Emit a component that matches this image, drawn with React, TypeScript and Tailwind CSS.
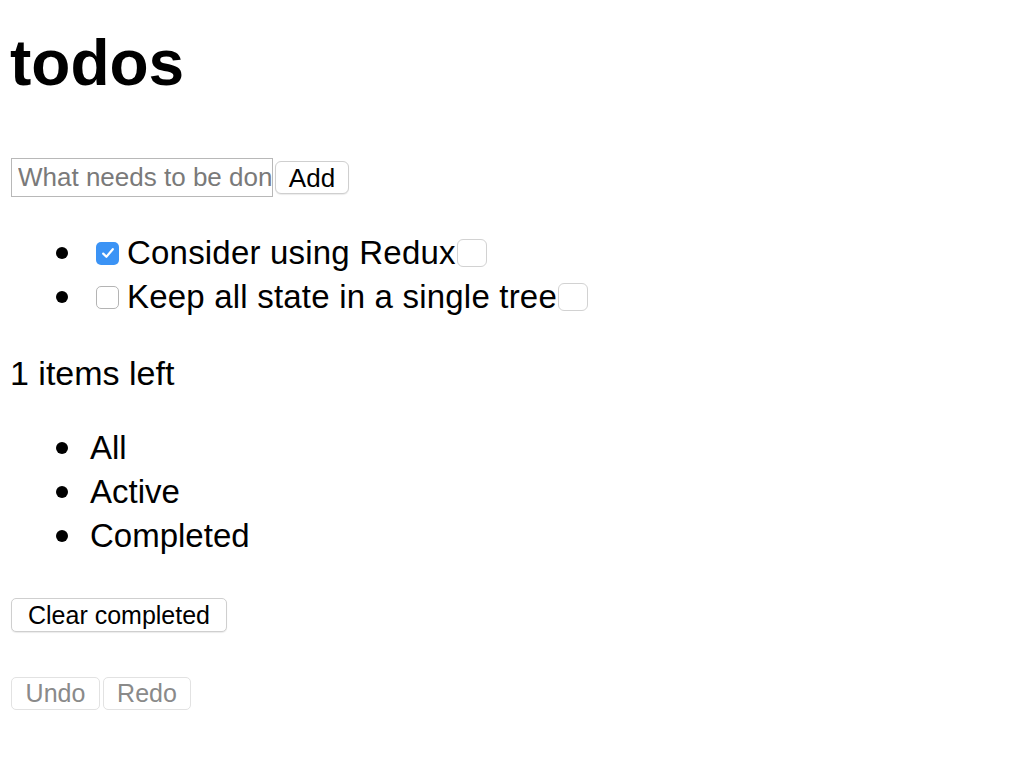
import React from "react";

const todos = [
  { text: "Consider using Redux", done: true },
  { text: "Keep all state in a single tree", done: false },
];

const filters = ["All", "Active", "Completed"];

function Bullet() {
  return <span className="w-[12px] h-[12px] rounded-full bg-black shrink-0" />;
}

function Checkbox({ checked }: { checked: boolean }) {
  if (checked) {
    return (
      <span className="w-[23px] h-[23px] rounded-[5px] bg-[#3b93f5] flex items-center justify-center shrink-0">
        <svg width="16" height="16" viewBox="0 0 16 16" fill="none">
          <path d="M3.2 8.6 L6.4 11.8 L12.8 4.2" stroke="white" strokeWidth="2.2" strokeLinecap="round" strokeLinejoin="round" />
        </svg>
      </span>
    );
  }
  return <span className="w-[23px] h-[23px] rounded-[5px] border border-[#b4b4b4] bg-white shrink-0" />;
}

export default function App() {
  return (
    <div className="bg-white min-h-[766px] text-black font-['Liberation_Sans',Arial,sans-serif] px-[10px] pt-[31px]">
      <h1 className="text-[64px] leading-[64px] font-bold">todos</h1>

      <div className="flex items-center mt-[63px] h-[39px] pl-[1px]">
        <input
          className="w-[262px] h-[39px] border border-[#b8b8b8] pl-[6px] pr-0 text-[26px] placeholder:text-[#7a7a7a] outline-none"
          placeholder="What needs to be done"
        />
        <button className="ml-[2px] w-[74px] h-[33px] rounded-[6px] border border-[#cfcfcf] bg-white text-[26px] leading-none shadow-[0_1px_1px_rgba(0,0,0,0.08)]">
          Add
        </button>
      </div>

      <ul className="mt-[34px]">
        {todos.map((t) => (
          <li key={t.text} className="flex items-center h-[44px] text-[33px]">
            <span className="w-[80px] flex pl-[46px]">
              <Bullet />
            </span>
            <span className="ml-[6px] flex">
              <Checkbox checked={t.done} />
            </span>
            <span className="ml-[8px] leading-[44px] tracking-[0.2px]">{t.text}</span>
            <button className="ml-[1px] w-[30px] h-[28px] rounded-[6px] border border-[#d2d2d2] bg-white" />
          </li>
        ))}
      </ul>

      <p className="mt-[32px] text-[34px] leading-[44px]">1 items left</p>

      <ul className="mt-[31px]">
        {filters.map((f) => (
          <li key={f} className="flex items-center h-[44px] text-[33px]">
            <span className="w-[80px] flex pl-[46px]">
              <Bullet />
            </span>
            <span className="leading-[44px]">{f}</span>
          </li>
        ))}
      </ul>

      <div className="mt-[40px] pl-[1px]">
        <button className="w-[216px] h-[34px] rounded-[5px] border border-[#cfcfcf] bg-white text-[25px] leading-none shadow-[0_1px_1px_rgba(0,0,0,0.08)]">
          Clear completed
        </button>
      </div>

      <div className="mt-[45px] pl-[1px] flex gap-[3px]">
        <button disabled className="w-[89px] h-[33px] rounded-[5px] border border-[#e2e2e2] bg-white text-[25px] leading-none text-[#8a8a8a]">
          Undo
        </button>
        <button disabled className="w-[88px] h-[33px] rounded-[5px] border border-[#e2e2e2] bg-white text-[25px] leading-none text-[#8a8a8a]">
          Redo
        </button>
      </div>
    </div>
  );
}
